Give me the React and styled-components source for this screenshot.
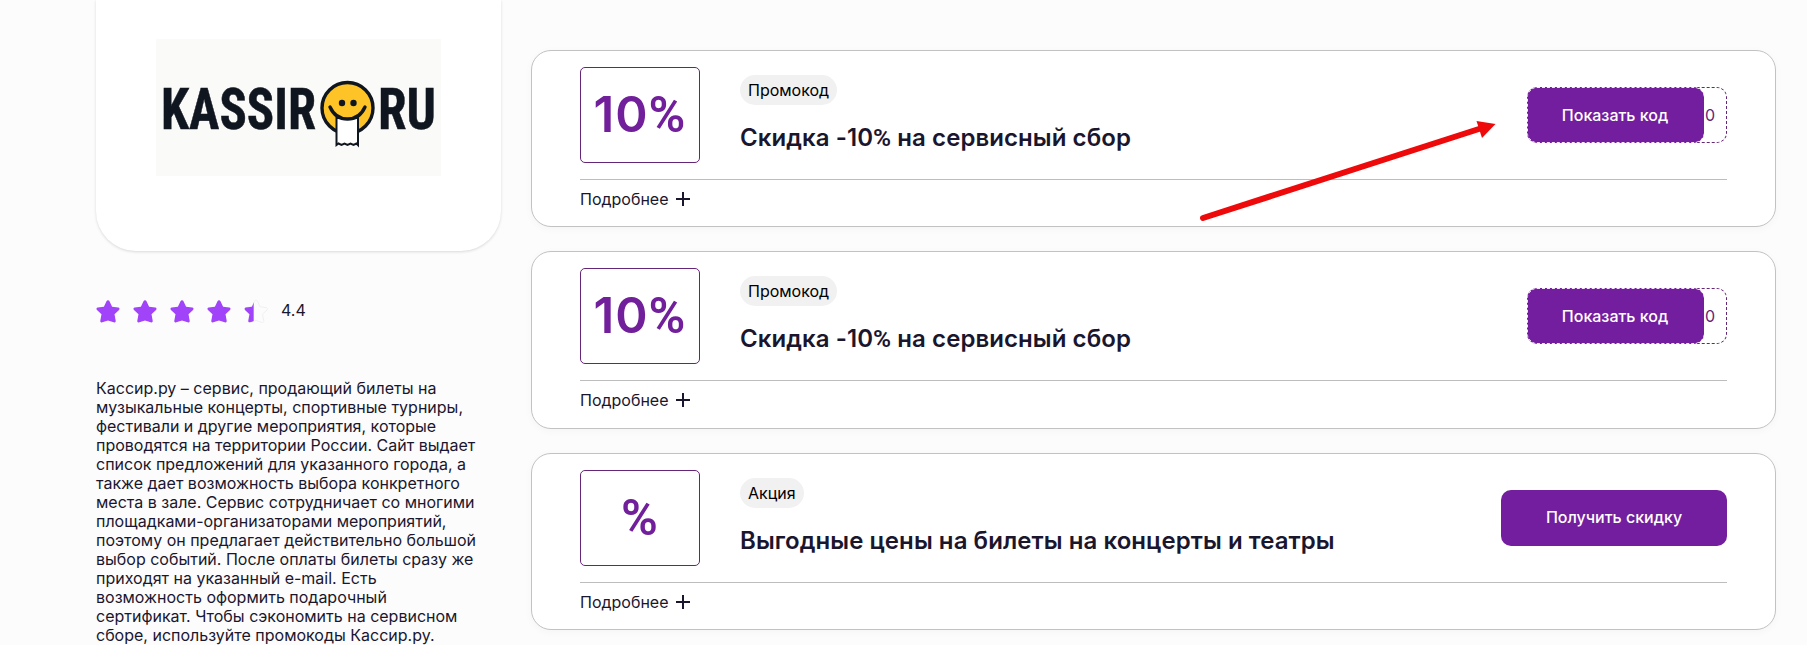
import React from 'react';
import styled, { createGlobalStyle } from 'styled-components';

const GlobalStyle = createGlobalStyle`
  * {
    box-sizing: border-box;
  }

  body {
    margin: 0;
    background: #fcfcfc;
    color: #1a162e;
    font-family: 'Inter', sans-serif;
    font-size: 16px;
    overflow: hidden;
  }
`;

const Page = styled.div`
  position: relative;
  display: flex;
  align-items: flex-start;
  gap: 30px;
  height: 645px;
  padding: 0 31px 0 96px;
  overflow: hidden;
`;

const Sidebar = styled.aside`
  flex: 0 0 405px;
`;

const LogoCard = styled.div`
  display: flex;
  justify-content: center;
  height: 251px;
  padding-top: 39px;
  background: #fff;
  border-radius: 0 0 40px 40px;
  box-shadow: 0 1px 3px rgba(0, 0, 0, 0.14);
`;

const LogoBox = styled.div`
  width: 285px;
  height: 137px;
  background: #fafaf8;
`;

const Rating = styled.div`
  display: flex;
  align-items: center;
  height: 24px;
  margin-top: 48px;
`;

const Stars = styled.div`
  display: flex;
  gap: 13px;
  margin-right: 13px;
`;

const RatingValue = styled.span`
  margin-top: -2px;
  line-height: 24px;
`;

const Description = styled.p`
  width: 390px;
  margin: 56px 0 0;
  font-size: 16px;
  line-height: 19px;
  white-space: pre-line;
`;

const Offers = styled.main`
  flex: 1;
  display: flex;
  flex-direction: column;
  gap: 24px;
  padding-top: 50px;
`;

const Card = styled.article`
  height: 177.4px;
  padding: 16px 48px 0;
  background: #fff;
  border: 1px solid #c2c2c2;
  border-radius: 20px;
  box-shadow: 0 2px 8px rgba(0, 0, 0, 0.03);
`;

const CardTop = styled.div`
  display: flex;
  align-items: center;
  height: 112px;
  padding-bottom: 16px;
`;

const Discount = styled.div`
  display: flex;
  align-items: center;
  justify-content: center;
  width: 120px;
  height: 96px;
  margin-right: 40px;
  padding-bottom: 1px;
  border: 1px solid #662678;
  border-radius: 5px;
  color: #711f9a;
  font-size: 49px;
  font-weight: 600;
  letter-spacing: 1px;
`;

const Percent = styled.span`
  font-family: 'Roboto', sans-serif;
  font-size: 1.02em;
  line-height: 1;
`;

const Info = styled.div`
  flex: 1;
  display: flex;
  flex-direction: column;
  align-items: flex-start;
  gap: 18px;
  padding-bottom: 2px;
`;

const Tag = styled.span`
  height: 30px;
  padding: 0 8px;
  background: #f1f1f1;
  border-radius: 15px;
  color: #000;
  line-height: 30px;
`;

const Title = styled.h2`
  margin: 0;
  font-size: 24px;
  font-weight: 600;
  letter-spacing: 0.07px;
  line-height: 30px;
`;

const Button = styled.button`
  width: 226px;
  height: 56px;
  padding: 0 0 1px;
  border: 0;
  border-radius: 10px;
  background: #731e9e;
  color: #fff;
  font-family: inherit;
  font-size: 16px;
  font-weight: 500;
`;

const CodeBox = styled.div`
  display: flex;
  align-items: center;
  width: 200px;
  height: 56px;
  border: 1px dashed #662678;
  border-radius: 10px;
  color: #662678;
`;

const CodeButton = styled(Button)`
  width: 177px;
  margin: -1px 1px -1px -1px;
  padding-right: 2px;
  border: 1px dashed #f3e6f8;
  border-right: 0;
  background-color: #731e9e;
`;

const More = styled.div`
  display: flex;
  align-items: center;
  gap: 7px;
  height: 41px;
  padding-bottom: 2px;
  border-top: 1px solid #bdbdbd;
`;

const Arrow = styled.svg`
  position: absolute;
  left: 1190px;
  top: 110px;
`;

const LogoText = styled.text`
  fill: #10161f;
  stroke: #10161f;
  stroke-width: 0.5px;
  font-family: 'Roboto', sans-serif;
  font-size: 58px;
  font-stretch: 75%;
  font-weight: 700;
`;

const starPath =
  'M12 1.2c.7 0 1.2.4 1.5 1.1l2.6 5.5 6.1.8c1.4.2 1.8 1.5.8 2.4l-4.5 4.2 1.2 6.6c.2 1.4-.9 2.1-2 1.5L12 21.4l-5.7 1.9c-1.100.6-2.200-.1-2-1.500l1.200-6.600L1 11c-1-.9-.6-2.200.8-2.400l6.100-.8 2.600-5.500c.3-.7.8-1.100 1.500-1.100z';

const Star = ({ partial }) => (
  <svg width='24' height='24' viewBox='0 0 24 24'>
    {partial ? (
      <>
        <path d={starPath} fill='#fcfcfc' stroke='#f1eff3' />
        <path d={starPath} fill='#a043f9' clipPath='inset(0 60% 0 0)' />
      </>
    ) : (
      <path d={starPath} fill='#a043f9' />
    )}
  </svg>
);

const Logo = () => (
  <svg width='285' height='137' viewBox='0 0 285 137'>
    <LogoText x='5' y='90' textLength='155' lengthAdjust='spacingAndGlyphs'>
      KASSIR
    </LogoText>
    <LogoText x='222' y='90' textLength='58' lengthAdjust='spacingAndGlyphs'>
      RU
    </LogoText>
    <g stroke='#10161f' fill='none' strokeLinecap='round'>
      <circle cx='191.5' cy='69' r='25.5' fill='#fec326' strokeWidth='3.4' />
      <path
        d='M180.5 79V106l2-1.5 3 1.5 3-1.5 3 1.5 3-1.5 3 1.5 3-1.5 1.5 1.5V79z'
        fill='#fff'
        strokeWidth='2'
      />
      <path
        d='M174 68c4 9 10 12 17.5 12s13.5-3 17.5-12'
        fill='#fec326'
        strokeWidth='3.4'
      />
    </g>
    <circle cx='186' cy='64' r='3.2' fill='#10161f' />
    <circle cx='197.5' cy='64' r='3.2' fill='#10161f' />
  </svg>
);

const Plus = () => (
  <svg width='14' height='14' viewBox='0 0 14 14'>
    <path d='M7 0v14M0 7h14' stroke='#1a162e' strokeWidth='2' />
  </svg>
);

// Percent signs use their own font
const withPercent = (text) =>
  text
    .split(/(%)/)
    .map((part, index) =>
      part === '%' ? <Percent key={index}>%</Percent> : part
    );

const description = `Кассир.ру – сервис, продающий билеты на
музыкальные концерты, спортивные турниры,
фестивали и другие мероприятия, которые
проводятся на территории России. Сайт выдает
список предложений для указанного города, а
также дает возможность выбора конкретного
места в зале. Сервис сотрудничает со многими
площадками-организаторами мероприятий,
поэтому он предлагает действительно большой
выбор событий. После оплаты билеты сразу же
приходят на указанный e-mail. Есть
возможность оформить подарочный
сертификат. Чтобы сэкономить на сервисном
сборе, используйте промокоды Кассир.ру.`;

const offers = [
  { discount: '10%', tag: 'Промокод', title: 'Скидка -10% на сервисный сбор', code: '0' },
  { discount: '10%', tag: 'Промокод', title: 'Скидка -10% на сервисный сбор', code: '0' },
  { discount: '%', tag: 'Акция', title: 'Выгодные цены на билеты на концерты и театры' },
];

const Offer = ({ discount, tag, title, code }) => (
  <Card>
    <CardTop>
      <Discount>
        <span>{withPercent(discount)}</span>
      </Discount>
      <Info>
        <Tag>{tag}</Tag>
        <Title>{withPercent(title)}</Title>
      </Info>
      {code ? (
        <CodeBox>
          <CodeButton>Показать код</CodeButton>
          {code}
        </CodeBox>
      ) : (
        <Button>Получить скидку</Button>
      )}
    </CardTop>
    <More>
      Подробнее <Plus />
    </More>
  </Card>
);

const App = () => (
  <>
    <GlobalStyle />
    <Page>
      <Sidebar>
        <LogoCard>
          <LogoBox>
            <Logo />
          </LogoBox>
        </LogoCard>
        <Rating>
          <Stars>
            {[1, 2, 3, 4, 5].map((n) => (
              <Star key={n} partial={n === 5} />
            ))}
          </Stars>
          <RatingValue>4.4</RatingValue>
        </Rating>
        <Description>{description}</Description>
      </Sidebar>
      <Offers>
        {offers.map((offer, index) => (
          <Offer key={index} {...offer} />
        ))}
      </Offers>
      <Arrow width='320' height='120' viewBox='0 0 320 120'>
        <path d='M13 108L292 18' stroke='#ee0a0a' strokeWidth='6' strokeLinecap='round' />
        <path d='M286.5 11L305.5 14 292 28z' fill='#ee0a0a' />
      </Arrow>
    </Page>
  </>
);

export default App;
